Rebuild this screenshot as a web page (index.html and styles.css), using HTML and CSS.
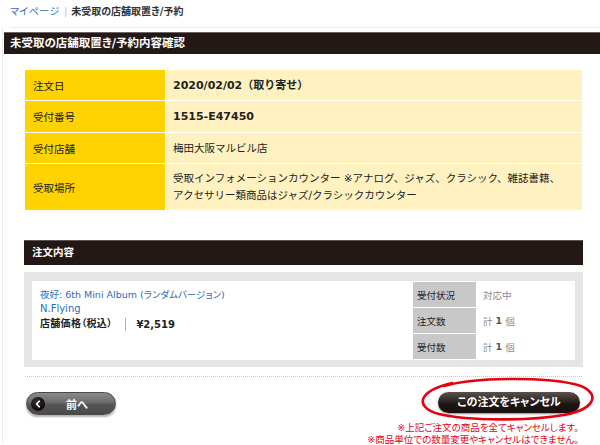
FILE: index.html
```html
<!DOCTYPE html>
<html lang="ja">
<head>
<meta charset="utf-8">
<title>未受取の店舗取置き/予約内容確認</title>
<link rel="stylesheet" href="styles.css">
</head>
<body>
<nav class="breadcrumb">
  <a class="crumb-link" href="#">マイページ</a><span class="crumb-sep">|</span><span class="crumb-current">未受取の店舗取置き/予約</span>
</nav>
<div class="main">
  <h1 class="title-bar">未受取の店舗取置き/予約内容確認</h1>
  <div class="content">
    <dl class="info">
      <dt class="info-label">注文日</dt>
      <dd class="info-value strong">2020/02/02（取り寄せ）</dd>
      <dt class="info-label">受付番号</dt>
      <dd class="info-value strong">1515-E47450</dd>
      <dt class="info-label">受付店舗</dt>
      <dd class="info-value">梅田大阪マルビル店</dd>
      <dt class="info-label">受取場所</dt>
      <dd class="info-value">受取インフォメーションカウンター ※アナログ、ジャズ、クラシック、雑誌書籍、<br>アクセサリー類商品はジャズ/クラシックカウンター</dd>
    </dl>

    <h2 class="section-bar">注文内容</h2>
    <div class="order-box">
      <div class="order-inner">
        <div class="item">
          <a class="item-title" href="#">夜好: 6th Mini Album (ランダムバージョン)</a>
          <a class="item-artist" href="#">N.Flying</a>
          <div class="price"><span class="price-label">店舗価格（税込）</span><span class="price-value">¥2,519</span></div>
        </div>
        <dl class="status">
          <dt class="status-label">受付状況</dt>
          <dd class="status-value">対応中</dd>
          <dt class="status-label">注文数</dt>
          <dd class="status-value">計 <b>1</b> 個</dd>
          <dt class="status-label">受付数</dt>
          <dd class="status-value">計 <b>1</b> 個</dd>
        </dl>
      </div>
    </div>

    <div class="actions">
      <a class="btn-back" href="#">
        <span class="back-icon"><svg width="8" height="8" viewBox="0 0 8 8"><path d="M5.2 1.2 L2.6 4 L5.2 6.8" fill="none" stroke="#fff" stroke-width="1.6" stroke-linecap="round" stroke-linejoin="round"/></svg></span>
        <span class="btn-back-text">前へ</span>
      </a>
      <div class="cancel-wrap">
        <a class="btn-cancel" href="#">この注文をキャンセル</a>
        <svg class="circle-mark" width="184" height="46" viewBox="0 0 184 46">
          <path d="M30 10 C 60 1, 130 1, 160 8 C 186 14, 186 32, 150 39 C 115 45, 55 45, 25 38 C 2 32, 1 16, 38 7" fill="none" stroke="#e60012" stroke-width="2.6" stroke-linecap="round"/>
        </svg>
        <p class="notes">※上記ご注文の商品を全てキャンセルします。<br>※商品単位での数量変更やキャンセルはできません。</p>
      </div>
    </div>
  </div>
</div>
</body>
</html>
```
FILE: styles.css
```css
html, body {
  margin: 0;
  padding: 0;
  background: #fff;
  overflow: hidden;
}
body {
  font-family: "DejaVu Sans", "Noto Sans CJK JP", sans-serif;
  color: #222;
  font-size: 11px;
}
a { text-decoration: none; }

.breadcrumb {
  margin-left: 10px;
  height: 27px;
  border-bottom: 1px solid #ececec;
  font-size: 10px;
  line-height: 24px;
  font-feature-settings: "palt";
}
.crumb-link { color: #3a70b8; letter-spacing: 0.5px; }
.crumb-sep { color: #c4c4c4; margin: 0 4px; }
.crumb-current { font-weight: bold; color: #333; }

.main {
  margin-left: 2px;
  border-left: 1px dotted #dcdcdc;
  padding-top: 4px;
}
.title-bar {
  margin: 0 0 0 1px;
  height: 22px;
  box-sizing: border-box;
  background: #231815;
  border-top: 1px solid #6a6462;
  color: #fff;
  font-size: 11.5px;
  font-weight: bold;
  line-height: 21px;
  padding-left: 6px;
  font-feature-settings: "palt";
}

.content {
  padding: 16px 18px 0 22px;
}

.info {
  margin: 0;
  display: grid;
  grid-template-columns: 140px 1fr;
  grid-template-rows: 30px 31px 30px 46px;
  gap: 1px;
}
.info-label {
  margin: 0;
  background: #ffd200;
  padding-left: 8px;
  display: flex;
  align-items: center;
  font-size: 10.5px;
}
.info-value {
  margin: 0;
  background: #fff2c0;
  padding-left: 7px;
  display: flex;
  align-items: center;
  line-height: 17px;
  font-size: 10.5px;
}
.info-value.strong { font-weight: bold; font-size: 11px; }

.section-bar {
  margin: 30px -1px 0;
  height: 25px;
  box-sizing: border-box;
  background: #231815;
  border-top: 1px solid #5a5452;
  color: #fff;
  font-size: 10.5px;
  font-weight: bold;
  line-height: 23px;
  padding-left: 8px;
}

.order-box {
  margin: 7px -1px 0;
  background: #e5e5e5;
  padding: 9px 8px 7px;
}
.order-inner {
  background: #fff;
  height: 79px;
  display: flex;
  justify-content: space-between;
}
.item {
  padding: 7px 8px 0;
  font-size: 10px;
  line-height: 14px;
  display: flex;
  flex-direction: column;
  align-items: flex-start;
  font-feature-settings: "palt";
}
.item-title { font-size: 9.5px; }
.item-title, .item-artist { color: #2a6cb8; }
.price {
  margin-top: 1px;
  display: flex;
  align-items: center;
  font-weight: bold;
  color: #222;
}
.price-label { margin-right: 13px; letter-spacing: 0.3px; }
.price-value {
  border-left: 1px solid #b0b0b0;
  padding-left: 10px;
  line-height: 13px;
}

.status {
  margin: 1px 0 0;
  display: grid;
  grid-template-columns: 63px 98px;
  grid-auto-rows: 25px;
  gap: 1px;
  align-self: flex-start;
  font-size: 9.5px;
}
.status-label {
  margin: 0;
  background: #c8c8c8;
  padding-left: 4px;
  display: flex;
  align-items: center;
  color: #222;
}
.status-value {
  margin: 0;
  padding-left: 6px;
  display: flex;
  align-items: center;
  gap: 3px;
  color: #8a8a8a;
}
.status-value b { color: #555; }

.actions {
  margin-top: 9px;
  border-top: 1px dotted #c8c8c8;
  padding-top: 15px;
  display: flex;
  justify-content: space-between;
  align-items: flex-start;
}
.btn-back {
  margin-left: 1px;
  width: 90px;
  height: 23px;
  box-sizing: border-box;
  border-radius: 12px;
  background: linear-gradient(#8a8a8a, #6c6c6c 45%, #555 55%, #4a4a4a);
  border: 1px solid #4a4a4a;
  box-shadow: 0 2px 2px rgba(0,0,0,0.3);
  display: flex;
  align-items: center;
  padding-left: 4px;
  color: #fff;
  font-weight: bold;
  font-size: 11px;
}
.back-icon {
  width: 14px;
  height: 14px;
  border-radius: 50%;
  background: radial-gradient(circle at 40% 35%, #3a3030, #0d0a0a 70%);
  display: flex;
  align-items: center;
  justify-content: center;
}
.btn-back-text {
  flex: 1;
  text-align: center;
  padding-right: 6px;
}

.cancel-wrap {
  position: relative;
  display: flex;
  flex-direction: column;
  align-items: flex-end;
}
.btn-cancel {
  margin-right: 2px;
  width: 142px;
  height: 21px;
  border-radius: 11px;
  background: linear-gradient(#5a504c, #2e2421 45%, #1c1411 60%, #1a1210);
  box-shadow: 0 1px 2px rgba(0,0,0,0.45);
  color: #fff;
  font-weight: bold;
  font-size: 11px;
  line-height: 21px;
  text-align: center;
  font-feature-settings: "palt";
}
.circle-mark {
  position: absolute;
  top: -16px;
  right: -16px;
  pointer-events: none;
}
.notes {
  margin: 9px 3px 0 0;
  color: #e60012;
  font-size: 9.5px;
  line-height: 12px;
  text-align: right;
  font-feature-settings: "palt";
}
```
